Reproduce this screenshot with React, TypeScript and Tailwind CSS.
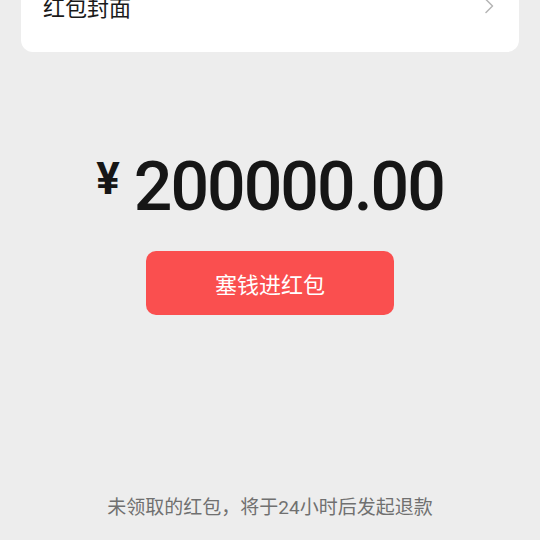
import React from "react";

export default function App() {
  return (
    <div
      className="w-[540px] h-[540px] overflow-hidden bg-[#ededed] flex flex-col items-center"
      style={{ fontFamily: 'Roboto, "Noto Sans CJK SC", sans-serif' }}
    >
      <div className="self-stretch mx-[21px] -mt-[40px] h-[92px] bg-white rounded-[12px] flex items-center justify-between pl-[22px] pr-[24px]">
        <span className="text-[22px] leading-[28px] text-[#1a1a1a]" style={{ fontFamily: '"Noto Sans CJK SC", sans-serif' }}>
          红包封面
        </span>
        <svg width="12" height="16" viewBox="0 0 12 16" fill="none">
          <path d="M3 1.5L9.5 8L3 14.5" stroke="#b5b5b5" strokeWidth="1.5" strokeLinecap="round" strokeLinejoin="round" />
        </svg>
      </div>

      <div className="mt-[101px] flex items-start text-[#161616]">
        <span className="text-[44px] leading-[44px] font-bold mt-[4px]">¥</span>
        <span className="ml-[14px] text-[68px] leading-[68px] font-medium tracking-[-2px]">200000.00</span>
      </div>

      <button className="mt-[30px] w-[248px] h-[64px] rounded-[10px] bg-[#fa4f4f] text-white text-[22px] flex items-center justify-center" style={{ fontFamily: '"Noto Sans CJK SC", sans-serif' }}>
        塞钱进红包
      </button>

      <div className="mt-auto mb-[19px] text-[19px] leading-[26px] text-[#707070]">
        未领取的红包，将于24小时后发起退款
      </div>
    </div>
  );
}
